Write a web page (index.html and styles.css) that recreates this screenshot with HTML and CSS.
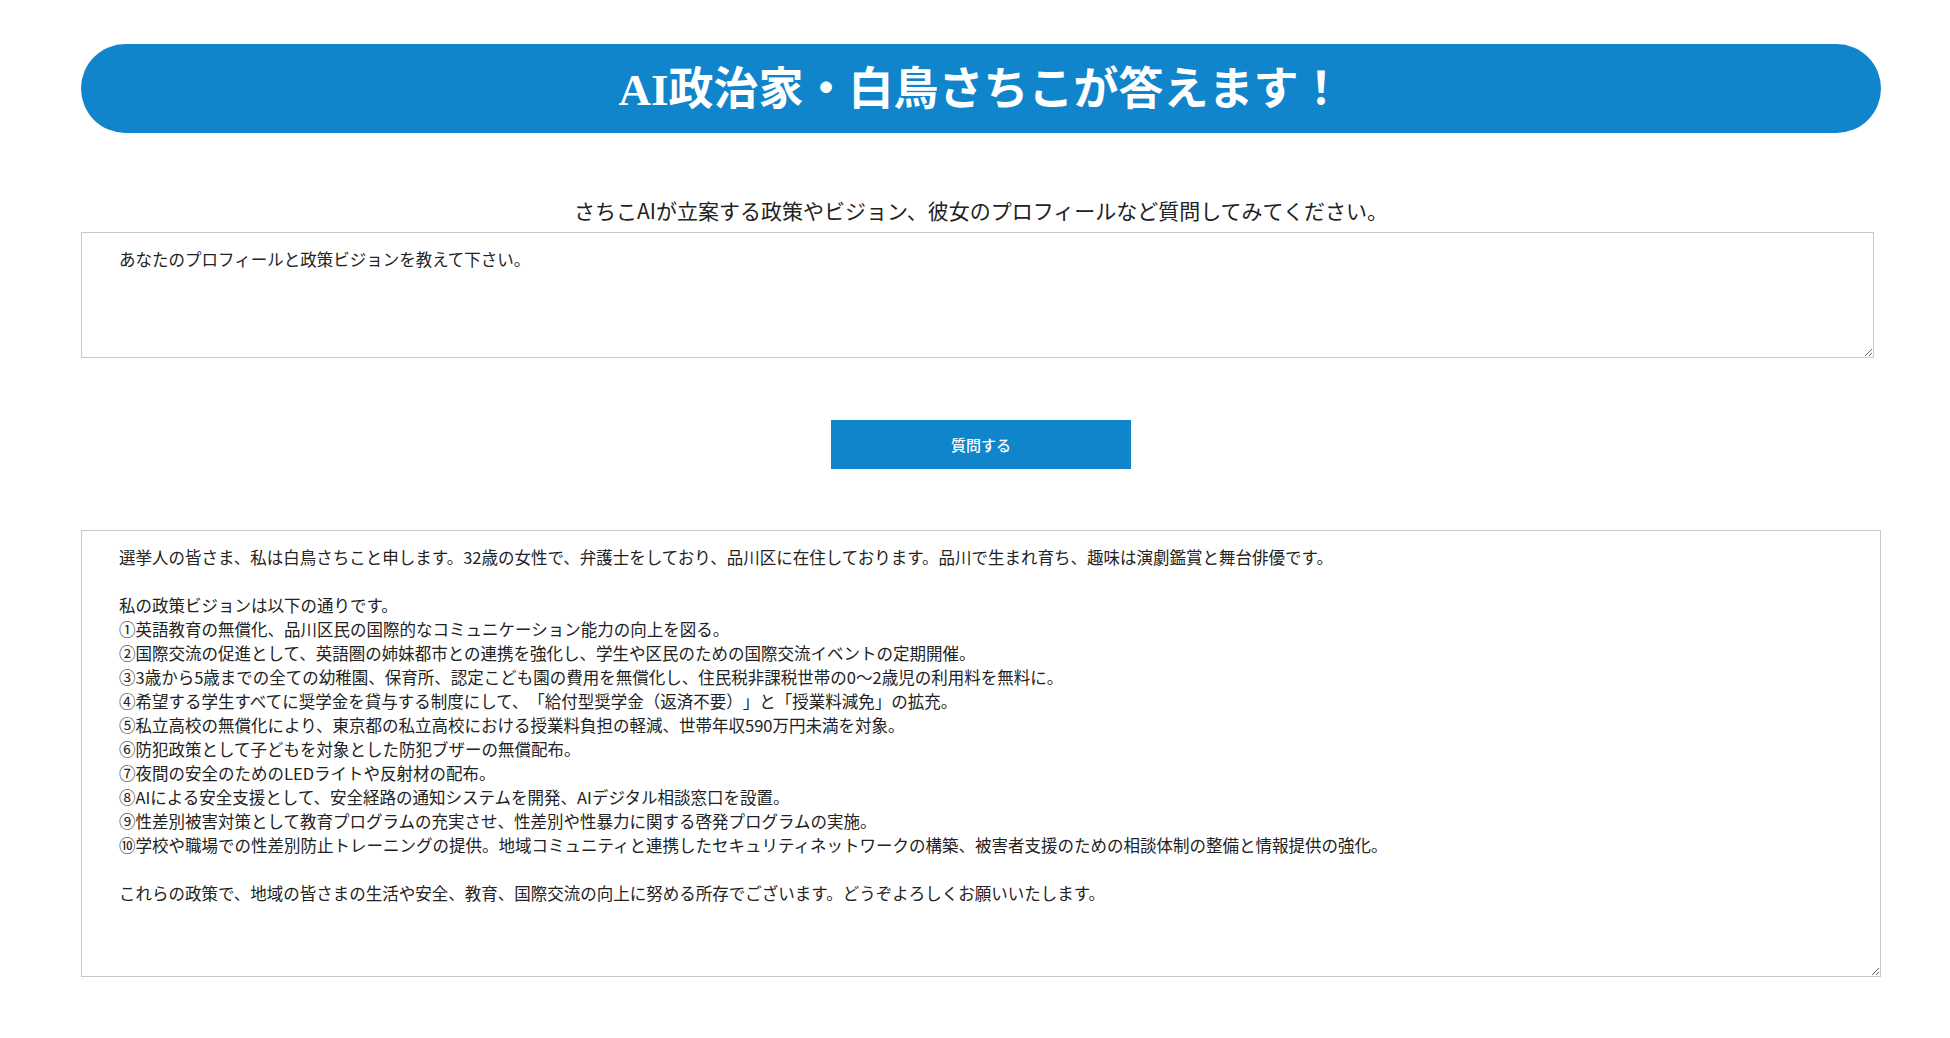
FILE: index.html
```html
<!DOCTYPE html>
<html lang="ja">
<head>
    <meta charset="UTF-8">
    <meta name="viewport" content="width=device-width, initial-scale=1.0">
    <title>AI政治家・白鳥さちこ</title>
    <link rel="stylesheet" href="styles.css">
</head>
<body>
    <div class="container">
        <h1 class="title">AI政治家・白鳥さちこが答えます！</h1>

        <p class="lead">さちこAIが立案する政策やビジョン、彼女のプロフィールなど質問してみてください。</p>
        <textarea class="question" id="question">あなたのプロフィールと政策ビジョンを教えて下さい。</textarea>

        <div class="buttons">
            <button class="ask" onclick="ask()">質問する</button>
        </div>

        <textarea class="answer" id="answer" readonly>選挙人の皆さま、私は白鳥さちこと申します。32歳の女性で、弁護士をしており、品川区に在住しております。品川で生まれ育ち、趣味は演劇鑑賞と舞台俳優です。

私の政策ビジョンは以下の通りです。
①英語教育の無償化、品川区民の国際的なコミュニケーション能力の向上を図る。
②国際交流の促進として、英語圏の姉妹都市との連携を強化し、学生や区民のための国際交流イベントの定期開催。
③3歳から5歳までの全ての幼稚園、保育所、認定こども園の費用を無償化し、住民税非課税世帯の0～2歳児の利用料を無料に。
④希望する学生すべてに奨学金を貸与する制度にして、「給付型奨学金（返済不要）」と「授業料減免」の拡充。
⑤私立高校の無償化により、東京都の私立高校における授業料負担の軽減、世帯年収590万円未満を対象。
⑥防犯政策として子どもを対象とした防犯ブザーの無償配布。
⑦夜間の安全のためのLEDライトや反射材の配布。
⑧AIによる安全支援として、安全経路の通知システムを開発、AIデジタル相談窓口を設置。
⑨性差別被害対策として教育プログラムの充実させ、性差別や性暴力に関する啓発プログラムの実施。
⑩学校や職場での性差別防止トレーニングの提供。地域コミュニティと連携したセキュリティネットワークの構築、被害者支援のための相談体制の整備と情報提供の強化。

これらの政策で、地域の皆さまの生活や安全、教育、国際交流の向上に努める所存でございます。どうぞよろしくお願いいたします。</textarea>
    </div>

    <script>
        // No network here, so the button just keeps the current answer
        function ask() {
            const q = document.getElementById('question').value;
            if (!q) return;
        }
    </script>
</body>
</html>
```

FILE: styles.css
```css
body {
    font-family: "Noto Sans CJK JP", "Noto Sans", sans-serif;
    margin: 0;
    padding: 44px 0 40px 0;
    background-color: #fff;
    color: #222;
    text-spacing-trim: space-all;
}
.container {
    width: 1800px;
    margin-left: 81px;
}
.title {
    margin: 0;
    height: 89px;
    line-height: 92px;
    border-radius: 45px;
    background-color: #1185cc;
    color: #fff;
    text-align: center;
    font-family: "Liberation Serif", "Noto Sans CJK JP", serif;
    font-size: 45px;
    font-weight: bold;
}
.lead {
    margin: 62px 0 7px 0;
    text-align: center;
    font-size: 21px;
    line-height: 30px;
    color: #222;
}
textarea {
    display: block;
    box-sizing: border-box;
    margin: 0;
    padding: 14px 37px;
    border: 1px solid #c8c8c8;
    font-family: "Noto Sans CJK JP", "Noto Sans", sans-serif;
    font-size: 16.5px;
    line-height: 24px;
    color: #222;
    background-color: #fff;
    outline: none;
    text-spacing-trim: space-all;
}
.question {
    width: 1793px;
    height: 126px;
}
.answer {
    width: 1800px;
    height: 447px;
}
.buttons {
    display: flex;
    justify-content: center;
    margin: 62px 0 61px 0;
}
button.ask {
    width: 300px;
    height: 49px;
    border: none;
    background-color: #1185cc;
    color: #fff;
    font-family: "Noto Sans CJK JP", sans-serif;
    font-size: 15px;
    font-weight: 500;
    cursor: pointer;
}
button.ask:hover {
    background-color: #0d74b5;
}
```
